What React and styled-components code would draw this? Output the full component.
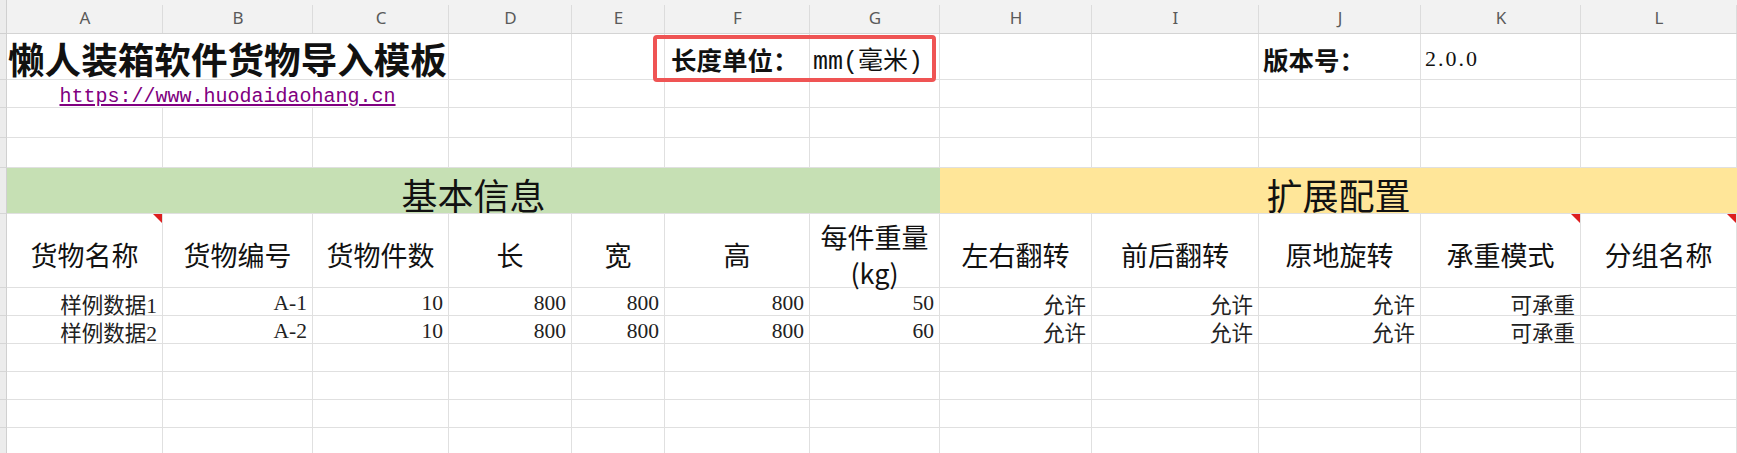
import React from "react";
import styled, { createGlobalStyle, css } from "styled-components";

const GlobalStyle = createGlobalStyle`
  html, body {
    margin: 0;
    padding: 0;
    background: #fff;
    overflow: hidden;
  }
`;

// column widths of A..L, taken from the sheet
const widths = [156, 150, 136, 123, 93, 145, 130, 152, 167, 162, 160, 156];
const letters = ["A", "B", "C", "D", "E", "F", "G", "H", "I", "J", "K", "L"];

const LINE = "#e0e0e0";
const CJK = `"Noto Sans CJK SC", sans-serif`;
const SERIF = `"Liberation Serif", "Noto Sans CJK SC", serif`;

const Sheet = styled.div`
  position: relative;
  display: grid;
  grid-template-columns: 7px ${widths.map((w) => w + "px").join(" ")};
  grid-template-rows: 34px 46px 28px 30px 30px 46px 74px repeat(7, 28px);
  width: 1737px;
  height: 453px;
  overflow: hidden;
  font-family: ${CJK};
  color: #111;
`;

const Corner = styled.div`
  background: #ececec;
  border-right: 1px solid #d0d0d0;
  border-bottom: 1px solid #d0d0d0;
`;

const ColHead = styled.div`
  position: relative;
  display: flex;
  align-items: center;
  justify-content: center;
  background: #f2f2f2;
  border-bottom: 1px solid #d4d4d4;
  font-family: "Noto Sans", sans-serif;
  font-size: 17px;
  color: #5a5a5a;
  padding-top: 2px;
  box-sizing: border-box;
  &::after {
    content: "";
    position: absolute;
    right: 0;
    top: 5px;
    bottom: 0;
    width: 1px;
    background: #dcdcdc;
  }
`;

const RowHead = styled.div`
  background: #ececec;
  border-right: 1px solid #d0d0d0;
  border-bottom: 1px solid #d6d6d6;
`;

const Cell = styled.div`
  position: relative;
  box-sizing: border-box;
  display: flex;
  align-items: center;
  min-width: 0;
  white-space: nowrap;
  grid-column: span ${(p) => p.$span || 1};
  border-right: 1px solid ${LINE};
  border-bottom: 1px solid ${LINE};
  ${(p) =>
    p.$note &&
    css`
      &::before {
        content: "";
        position: absolute;
        top: 0;
        right: 0;
        border-style: solid;
        border-width: 0 9px 9px 0;
        border-color: transparent #dd1f1f transparent transparent;
      }
    `}
`;

const TitleCell = styled(Cell)`
  padding: 4px 0 0 1px;
  font-size: 36.6px;
  font-weight: 700;
  letter-spacing: 0;
`;

const UrlCell = styled(Cell)`
  justify-content: center;
  padding-top: 5px;
  a {
    font-family: "Liberation Mono", monospace;
    font-size: 20px;
    color: #800080;
    text-decoration: underline;
    text-underline-offset: 2px;
  }
`;

const LabelCell = styled(Cell)`
  padding: 4px 0 0 ${(p) => p.$pl || 4}px;
  font-size: 25.5px;
  font-weight: 700;
`;

const UnitCell = styled(Cell)`
  padding: 4px 0 0 3px;
  font-size: 25px;
  font-family: "Liberation Mono", "Noto Sans CJK SC", monospace;
`;

const VersionCell = styled(Cell)`
  padding: 4px 0 0 4px;
  font-family: ${SERIF};
  font-size: 22px;
  letter-spacing: 2px;
`;

const BandCell = styled(Cell)`
  justify-content: center;
  padding-top: 6px;
  background: ${(p) => p.$bg};
  border-right: none;
  font-size: 36px;
  font-weight: 400;
  letter-spacing: 0;
`;

const HeadCell = styled(Cell)`
  justify-content: center;
  text-align: center;
  padding-top: 8px;
  font-size: 27px;
  line-height: 36px;
  color: #111;
`;

const DataCell = styled(Cell)`
  justify-content: flex-end;
  padding: 3px 5px 0 0;
  font-family: ${SERIF};
  font-size: 21.5px;
  color: #222;
`;

const UnitBox = styled.div`
  position: absolute;
  left: 653px;
  top: 35px;
  width: 283px;
  height: 47px;
  box-sizing: border-box;
  border: 4px solid #ef5454;
  border-radius: 4px;
  pointer-events: none;
`;

const headers = [
  { t: "货物名称", note: true },
  { t: "货物编号" },
  { t: "货物件数" },
  { t: "长" },
  { t: "宽" },
  { t: "高" },
  { t: "每件重量\n(kg)" },
  { t: "左右翻转" },
  { t: "前后翻转" },
  { t: "原地旋转" },
  { t: "承重模式", note: true },
  { t: "分组名称", note: true },
];

const rows = [
  ["样例数据1", "A-1", "10", "800", "800", "800", "50", "允许", "允许", "允许", "可承重", ""],
  ["样例数据2", "A-2", "10", "800", "800", "800", "60", "允许", "允许", "允许", "可承重", ""],
];

const Empty = ({ n }) =>
  Array.from({ length: n }, (_, i) => <Cell key={i} />);

const App = () => {
  return (
    <>
      <GlobalStyle />
      <Sheet>
        <Corner />
        {letters.map((l) => (
          <ColHead key={l}>{l}</ColHead>
        ))}

        {/* row 1 */}
        <RowHead />
        <TitleCell $span={3}>懒人装箱软件货物导入模板</TitleCell>
        <Cell />
        <Cell />
        <LabelCell $pl={6}>长度单位：</LabelCell>
        <UnitCell>mm(毫米)</UnitCell>
        <Cell />
        <Cell />
        <LabelCell>版本号：</LabelCell>
        <VersionCell>2.0.0</VersionCell>
        <Cell />

        {/* row 2 */}
        <RowHead />
        <UrlCell $span={3}>
          <a>https://www.huodaidaohang.cn</a>
        </UrlCell>
        <Empty n={9} />

        {/* rows 3-4 */}
        <RowHead />
        <Empty n={12} />
        <RowHead />
        <Empty n={12} />

        {/* section band */}
        <RowHead />
        <BandCell $span={7} $bg="#c6e0b4">基本信息</BandCell>
        <BandCell $span={5} $bg="#ffe699">扩展配置</BandCell>

        {/* column titles */}
        <RowHead />
        {headers.map((h, i) => (
          <HeadCell key={i} $note={h.note}>
            <span style={{ whiteSpace: "pre" }}>{h.t}</span>
          </HeadCell>
        ))}

        {/* data */}
        {rows.map((r, ri) => (
          <React.Fragment key={ri}>
            <RowHead />
            {r.map((v, ci) => (
              <DataCell key={ci}>{v}</DataCell>
            ))}
          </React.Fragment>
        ))}

        {Array.from({ length: 5 }, (_, i) => (
          <React.Fragment key={"e" + i}>
            <RowHead />
            <Empty n={12} />
          </React.Fragment>
        ))}

        <UnitBox />
      </Sheet>
    </>
  );
};

export default App;
